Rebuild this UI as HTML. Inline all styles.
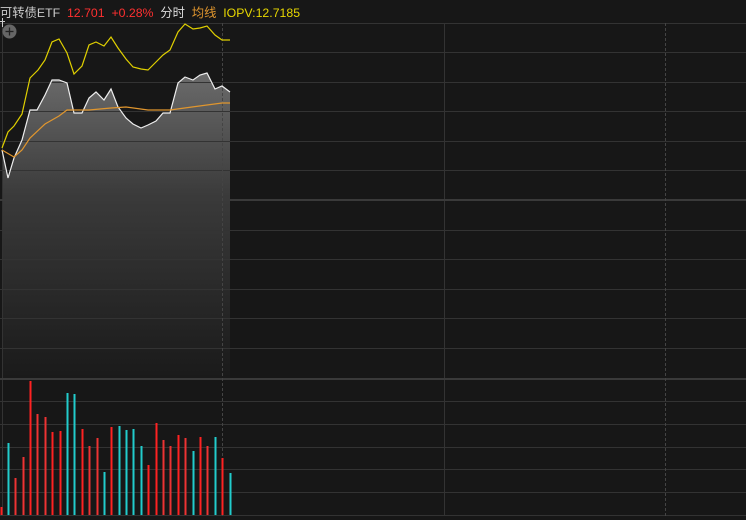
<!DOCTYPE html>
<html><head><meta charset="utf-8"><style>
html,body{margin:0;padding:0;background:#171717;width:746px;height:520px;overflow:hidden}
.hd{position:absolute;left:0;top:3px;font:12.3px "Liberation Sans","Noto Sans CJK SC",sans-serif;white-space:pre}
</style></head><body>
<svg width="746" height="520" style="position:absolute;left:0;top:0">
<defs><linearGradient id="g" gradientUnits="userSpaceOnUse" x1="0" y1="75" x2="0" y2="379">
<stop offset="0" stop-color="#6a6a6a"/><stop offset="0.4" stop-color="#3a3a3a"/><stop offset="1" stop-color="#1a1a1a"/></linearGradient></defs>
<path d="M2,150 L8,178 L14,158 L22,140 L30,110 L37,110 L45,95 L52,80 L59,80 L67,83 L74,113 L82,113 L89,98 L96,92 L104,100 L111,89 L118,107 L126,118 L133,124 L141,128 L148,125 L156,121 L163,113 L170,113 L178,83 L185,77 L193,80 L200,75 L207,73 L215,89 L222,86 L230,92 L230,379 L2,379 Z" fill="url(#g)"/>
<g stroke="#333" stroke-width="1">
<line x1="0" y1="23.5" x2="746" y2="23.5"/><line x1="0" y1="52.5" x2="746" y2="52.5"/><line x1="0" y1="82.5" x2="746" y2="82.5"/><line x1="0" y1="111.5" x2="746" y2="111.5"/><line x1="0" y1="141.5" x2="746" y2="141.5"/><line x1="0" y1="170.5" x2="746" y2="170.5"/>
<line x1="0" y1="230.5" x2="746" y2="230.5"/><line x1="0" y1="259.5" x2="746" y2="259.5"/><line x1="0" y1="289.5" x2="746" y2="289.5"/><line x1="0" y1="318.5" x2="746" y2="318.5"/><line x1="0" y1="348.5" x2="746" y2="348.5"/>
<line x1="0" y1="401.5" x2="746" y2="401.5"/><line x1="0" y1="424.5" x2="746" y2="424.5"/><line x1="0" y1="447.5" x2="746" y2="447.5"/><line x1="0" y1="469.5" x2="746" y2="469.5"/><line x1="0" y1="492.5" x2="746" y2="492.5"/><line x1="0" y1="515.5" x2="746" y2="515.5"/>
<line x1="2.5" y1="23" x2="2.5" y2="516"/><line x1="444.5" y1="23" x2="444.5" y2="516"/>
</g>
<g stroke="#3a3a3a" stroke-width="2"><line x1="0" y1="200" x2="746" y2="200"/><line x1="0" y1="379" x2="746" y2="379"/></g>
<g stroke="#444" stroke-dasharray="3,2"><line x1="222.5" y1="23" x2="222.5" y2="516"/><line x1="665.5" y1="23" x2="665.5" y2="516"/></g>
<polyline fill="none" stroke="#e0d000" stroke-width="1.2" points="2,148 8,132 14,126 22,114 30,78 38,70 45,60 52,42 59,39 67,53 74,74 82,66 89,45 96,42 104,46 111,37 118,48 126,59 133,67 141,69 148,70 156,62 163,55 170,50 178,32 185,24 193,29 200,28 207,26 215,35 222,40 230,40"/>
<polyline fill="none" stroke="#eeeeee" stroke-width="1.2" points="2,150 8,178 14,158 22,140 30,110 37,110 45,95 52,80 59,80 67,83 74,113 82,113 89,98 96,92 104,100 111,89 118,107 126,118 133,124 141,128 148,125 156,121 163,113 170,113 178,83 185,77 193,80 200,75 207,73 215,89 222,86 230,92"/>
<polyline fill="none" stroke="#e0962e" stroke-width="1.2" points="2,150 14,157 22,150 30,138 45,124 59,116 67,110 89,110 111,108 126,107 148,110 170,110 192,107 222,103 230,103"/>
<g stroke-width="2">
<line x1="1.5" y1="507" x2="1.5" y2="515" stroke="#f22"/>
<line x1="8.5" y1="443" x2="8.5" y2="515" stroke="#2cc"/>
<line x1="15.5" y1="478" x2="15.5" y2="515" stroke="#e33"/>
<line x1="23.5" y1="457" x2="23.5" y2="515" stroke="#e33"/>
<line x1="30.5" y1="381" x2="30.5" y2="515" stroke="#f22"/>
<line x1="37.5" y1="414" x2="37.5" y2="515" stroke="#e33"/>
<line x1="45.5" y1="417" x2="45.5" y2="515" stroke="#e33"/>
<line x1="52.5" y1="432" x2="52.5" y2="515" stroke="#f22"/>
<line x1="60.5" y1="431" x2="60.5" y2="515" stroke="#f22"/>
<line x1="67.5" y1="393" x2="67.5" y2="515" stroke="#2cc"/>
<line x1="74.5" y1="394" x2="74.5" y2="515" stroke="#2cc"/>
<line x1="82.5" y1="429" x2="82.5" y2="515" stroke="#f22"/>
<line x1="89.5" y1="446" x2="89.5" y2="515" stroke="#e33"/>
<line x1="97.5" y1="438" x2="97.5" y2="515" stroke="#e33"/>
<line x1="104.5" y1="472" x2="104.5" y2="515" stroke="#2cc"/>
<line x1="111.5" y1="427" x2="111.5" y2="515" stroke="#f22"/>
<line x1="119.5" y1="426" x2="119.5" y2="515" stroke="#2cc"/>
<line x1="126.5" y1="430" x2="126.5" y2="515" stroke="#2cc"/>
<line x1="133.5" y1="429" x2="133.5" y2="515" stroke="#2cc"/>
<line x1="141.5" y1="446" x2="141.5" y2="515" stroke="#2cc"/>
<line x1="148.5" y1="465" x2="148.5" y2="515" stroke="#f22"/>
<line x1="156.5" y1="423" x2="156.5" y2="515" stroke="#f22"/>
<line x1="163.5" y1="440" x2="163.5" y2="515" stroke="#e33"/>
<line x1="170.5" y1="446" x2="170.5" y2="515" stroke="#e33"/>
<line x1="178.5" y1="435" x2="178.5" y2="515" stroke="#f22"/>
<line x1="185.5" y1="438" x2="185.5" y2="515" stroke="#e33"/>
<line x1="193.5" y1="451" x2="193.5" y2="515" stroke="#2cc"/>
<line x1="200.5" y1="437" x2="200.5" y2="515" stroke="#f22"/>
<line x1="207.5" y1="446" x2="207.5" y2="515" stroke="#e33"/>
<line x1="215.5" y1="437" x2="215.5" y2="515" stroke="#2cc"/>
<line x1="222.5" y1="458" x2="222.5" y2="515" stroke="#f22"/>
<line x1="230.5" y1="473" x2="230.5" y2="515" stroke="#2cc"/>
</g>
<circle cx="9.5" cy="31.5" r="7" fill="#666"/>
<g stroke="#222" stroke-width="1.3"><line x1="5.5" y1="31.5" x2="13.5" y2="31.5"/><line x1="9.5" y1="27.5" x2="9.5" y2="35.5"/></g>
<g stroke="#ccc" stroke-width="1"><line x1="2.5" y1="18" x2="2.5" y2="27"/><line x1="0" y1="21.5" x2="5" y2="21.5"/></g>
</svg>
<div class="hd"><span style="color:#ccc">可转债ETF</span>  <span style="color:#ff3030">12.701</span>  <span style="color:#ff3030">+0.28%</span>  <span style="color:#ddd">分时</span>  <span style="color:#e0962e">均线</span>  <span style="color:#e8d800">IOPV:12.7185</span></div>
</body></html>
